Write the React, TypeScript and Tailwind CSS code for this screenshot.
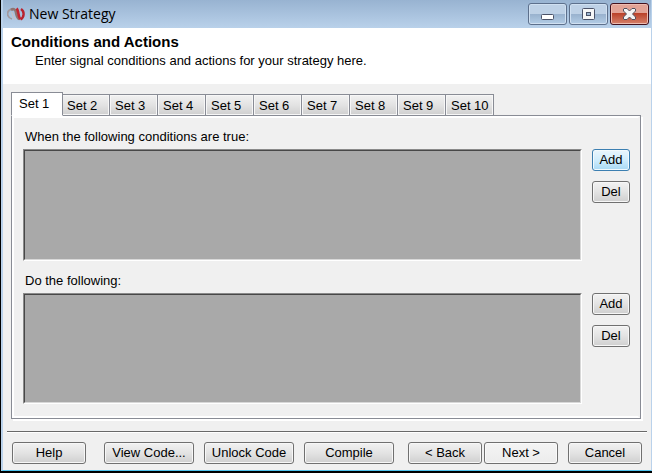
import { useState } from 'react';
import type { ReactNode } from 'react';
import clsx from 'clsx';

const sets = ['Set 1', 'Set 2', 'Set 3', 'Set 4', 'Set 5', 'Set 6', 'Set 7', 'Set 8', 'Set 9', 'Set 10'];

interface ButtonProps {
  children: ReactNode;
  className?: string;
  variant?: 'normal' | 'focus' | 'light';
}

function Button({ children, className, variant = 'normal' }: ButtonProps) {
  return (
    <button
      type="button"
      className={clsx(
        'flex h-[22px] shrink-0 items-center justify-center whitespace-nowrap rounded-[3px] border bg-linear-to-b ring-1 ring-inset',
        variant === 'normal' && 'border-[#707070] from-[#f2f2f2] via-[#e3e3e3] to-[#cfcfcf] ring-[#f7f7f7]',
        variant === 'focus' && 'border-[#3c7fb1] from-[#eaf6fd] via-[#d0edfd] to-[#a7d9f5] ring-[#f2fafe]',
        variant === 'light' && 'border-[#707070] from-[#f4f4f4] to-[#ececec] ring-[#fafafa]',
        className,
      )}
    >
      {children}
    </button>
  );
}

interface RuleListProps {
  title: string;
  focusAdd?: boolean;
}

function RuleList({ title, focusAdd }: RuleListProps) {
  return (
    <section aria-label={title} className="flex flex-1 flex-col gap-1">
      <h2 className="h-4 pl-0.5 leading-4">{title}</h2>
      <div className="flex flex-1 gap-2.5">
        <div className="min-h-24 flex-1 border border-b-white border-l-[#8a8a8a] border-r-white border-t-[#8a8a8a]">
          <div className="h-full border border-b-[#d8d8d8] border-l-[#484848] border-r-[#d8d8d8] border-t-[#484848] bg-[#a9a9a9]" />
        </div>
        <div className="flex flex-col gap-2.5">
          <Button className="w-[38px]" variant={focusAdd ? 'focus' : 'normal'}>Add</Button>
          <Button className="w-[38px]">Del</Button>
        </div>
      </div>
    </section>
  );
}

function TitleBar() {
  return (
    <header className="flex h-7 shrink-0 items-start justify-between bg-linear-to-b from-[#98b3d1] to-[#b9d1ea] pl-1 pr-0.5">
      <div className="flex h-7 items-center gap-1 font-['Open_Sans',sans-serif] text-sm">
        <svg className="size-[18px]" viewBox="0 0 18 18" fill="none" aria-hidden="true">
          <path d="M5 14C1 13-1 8.500 2 5.500 3 4.500 4.500 4 6 4" stroke="#a39a9f" strokeWidth="1.800" />
          <path d="M4 5C6.500 3.200 8.500 4.500 9 7.500c.6 3 1 6 3.500 6.500" stroke="#8d7472" strokeWidth="2.600" />
          <path d="M4.500 7c1.500 2 1 5.500 3.500 7.500" stroke="#c9bfc3" strokeWidth="1.200" />
          <path d="M9.500 3.500c2.500 2 1.300 8.500 4 10.500" stroke="#c02430" strokeWidth="2.600" />
          <path d="M14 4c3.800 2.500 3.300 8.500-.5 10.500" stroke="#b8222e" strokeWidth="2.400" />
        </svg>
        <h1>New Strategy</h1>
      </div>
      <div className="flex gap-0.5 pt-[3px]">
        <button
          type="button"
          aria-label="Minimize"
          className="flex h-[22px] w-[39px] items-center justify-center rounded-[3px] border border-[#5d708c] bg-linear-to-b from-[#bed1e6] from-50% via-[#98b1cd] via-50% to-[#b3cde6] ring-1 ring-inset ring-[#d0e0f1]"
        >
          <svg className="h-4 w-[17px]" viewBox="0 0 17 16" aria-hidden="true">
            <rect x="2.5" y="8.5" width="12" height="5" rx="1" fill="#fff" stroke="#4b5268" />
          </svg>
        </button>
        <button
          type="button"
          aria-label="Maximize"
          className="flex h-[22px] w-[39px] items-center justify-center rounded-[3px] border border-[#5d708c] bg-linear-to-b from-[#bed1e6] from-50% via-[#98b1cd] via-50% to-[#b3cde6] ring-1 ring-inset ring-[#d0e0f1]"
        >
          <svg className="h-4 w-[17px]" viewBox="0 0 17 16" aria-hidden="true">
            <rect x="2.5" y="2.5" width="12" height="11" rx="1" fill="#f7f7f7" stroke="#4b5268" />
            <rect x="6.5" y="6.5" width="4" height="3" fill="#9db6d0" stroke="#4b5268" />
          </svg>
        </button>
        <button
          type="button"
          aria-label="Close"
          className="flex h-[22px] w-[39px] items-center justify-center rounded-[3px] border border-[#43101c] bg-linear-to-b from-[#e2a396] from-45% via-[#b93f27] via-45% to-[#d5806a] ring-1 ring-inset ring-[#edbbb0]"
        >
          <svg className="h-4 w-[17px]" viewBox="0 0 17 16" aria-hidden="true">
            <path
              d="M3 2.500h3L8.500 5 11 2.500h3l.5.5v2L11.500 8l3 3v2l-.5.500h-3L8.500 11 6 13.500H3l-.5-.5v-2l3-3-3-3V3z"
              fill="#f4f4f4"
              stroke="#51515f"
              strokeLinejoin="round"
            />
          </svg>
        </button>
      </div>
    </header>
  );
}

function App() {
  const [active, setActive] = useState('Set 1');

  return (
    <div className="flex min-h-screen flex-col border-b-2 border-l border-black bg-[#f0f0f0] font-['Liberation_Sans',Arial,sans-serif] text-[13px] text-black">
      <div className="flex flex-1 flex-col border-b border-l-2 border-r border-b-[#4fc4ee] border-l-[#bad2eb] border-r-[#bad2eb]">
        <TitleBar />

        <div className="h-14 bg-white px-2 pt-1">
          <p className="text-[15px] font-bold leading-5">Conditions and Actions</p>
          <p className="pl-6 leading-[18px]">Enter signal conditions and actions for your strategy here.</p>
        </div>

        <main className="flex flex-1 flex-col px-2 pr-2.5 pt-2">
          <div role="tablist" className="z-10 -mb-px flex items-end">
            {sets.map((name) => (
              <button
                key={name}
                id={name.replace(' ', '-')}
                type="button"
                role="tab"
                aria-selected={name === active}
                aria-controls="set-panel"
                onClick={() => setActive(name)}
                className={clsx(
                  'whitespace-nowrap border border-[#898c95] text-left',
                  name === active
                    ? 'relative z-10 -mr-px h-6 w-[52px] border-b-white bg-white pl-[7px]'
                    : 'h-[22px] w-12 border-l-0 bg-linear-to-b from-[#f2f2f2] via-[#e3e3e3] to-[#cfcfcf] pl-[5px] pt-px ring-1 ring-inset ring-[#f7f7f7]',
                )}
              >
                {name}
              </button>
            ))}
          </div>

          <div
            id="set-panel"
            role="tabpanel"
            aria-labelledby={active.replace(' ', '-')}
            className="flex flex-1 border border-[#898c95] shadow-[2px_2px_0_#ffffff]"
          >
            <div className="flex flex-1 flex-col gap-3 border-2 border-white border-r-[#f0f0f0] px-2 pb-3 pl-[9px] pt-[11px]">
              <RuleList title="When the following conditions are true:" focusAdd />
              <RuleList title="Do the following:" />
            </div>
          </div>
        </main>

        <footer className="mx-1 mt-3 flex justify-between border-t border-[#696969] px-[5px] pb-1.5 pt-2.5 shadow-[inset_0_1px_0_#ffffff]">
          <div className="flex gap-2.5">
            <Button className="mr-2 w-[74px]">Help</Button>
            <Button className="w-[90px]">View Code...</Button>
            <Button className="w-[90px]">Unlock Code</Button>
            <Button className="w-[90px]">Compile</Button>
          </div>
          <div className="flex gap-0.5">
            <Button className="w-[74px]">&lt; Back</Button>
            <Button className="mr-2 w-[74px]" variant="light">Next &gt;</Button>
            <Button className="w-[74px]">Cancel</Button>
          </div>
        </footer>
      </div>
    </div>
  );
}

export default App;
